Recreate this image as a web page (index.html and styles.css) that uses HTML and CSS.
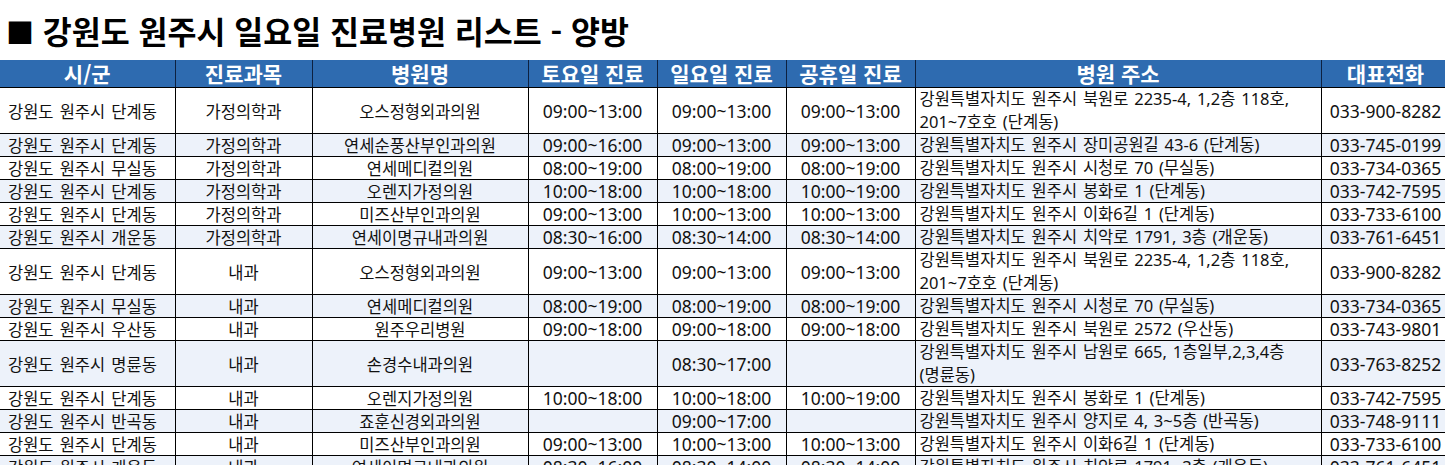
FILE: index.html
```html
<!DOCTYPE html>
<html lang="ko">
<head>
<meta charset="utf-8">
<title>강원도 원주시 일요일 진료병원 리스트 - 양방</title>
<link rel="stylesheet" href="styles.css">
</head>
<body>
<h1 class="title"><span class="sq">■</span> 강원도 원주시 일요일 진료병원 리스트 - 양방</h1>
<table class="list">
<colgroup>
<col class="c-city"><col class="c-dept"><col class="c-name"><col class="c-time"><col class="c-time"><col class="c-time"><col class="c-addr"><col class="c-tel">
</colgroup>
<thead>
<tr><th>시/군</th><th>진료과목</th><th>병원명</th><th>토요일 진료</th><th>일요일 진료</th><th>공휴일 진료</th><th>병원 주소</th><th>대표전화</th></tr>
</thead>
<tbody>
<tr class="double"><td class="city">강원도 원주시 단계동</td><td>가정의학과</td><td>오스정형외과의원</td><td class="num">09:00~13:00</td><td class="num">09:00~13:00</td><td class="num">09:00~13:00</td><td class="addr">강원특별자치도 원주시 북원로 2235-4, 1,2층 118호,<br>201~7호호 (단계동)</td><td class="num">033-900-8282</td></tr>
<tr class="alt"><td class="city">강원도 원주시 단계동</td><td>가정의학과</td><td>연세순풍산부인과의원</td><td class="num">09:00~16:00</td><td class="num">09:00~13:00</td><td class="num">09:00~13:00</td><td class="addr">강원특별자치도 원주시 장미공원길 43-6 (단계동)</td><td class="num">033-745-0199</td></tr>
<tr><td class="city">강원도 원주시 무실동</td><td>가정의학과</td><td>연세메디컬의원</td><td class="num">08:00~19:00</td><td class="num">08:00~19:00</td><td class="num">08:00~19:00</td><td class="addr">강원특별자치도 원주시 시청로 70 (무실동)</td><td class="num">033-734-0365</td></tr>
<tr class="alt"><td class="city">강원도 원주시 단계동</td><td>가정의학과</td><td>오렌지가정의원</td><td class="num">10:00~18:00</td><td class="num">10:00~18:00</td><td class="num">10:00~19:00</td><td class="addr">강원특별자치도 원주시 봉화로 1 (단계동)</td><td class="num">033-742-7595</td></tr>
<tr><td class="city">강원도 원주시 단계동</td><td>가정의학과</td><td>미즈산부인과의원</td><td class="num">09:00~13:00</td><td class="num">10:00~13:00</td><td class="num">10:00~13:00</td><td class="addr">강원특별자치도 원주시 이화6길 1 (단계동)</td><td class="num">033-733-6100</td></tr>
<tr class="alt"><td class="city">강원도 원주시 개운동</td><td>가정의학과</td><td>연세이명규내과의원</td><td class="num">08:30~16:00</td><td class="num">08:30~14:00</td><td class="num">08:30~14:00</td><td class="addr">강원특별자치도 원주시 치악로 1791, 3층 (개운동)</td><td class="num">033-761-6451</td></tr>
<tr class="double"><td class="city">강원도 원주시 단계동</td><td>내과</td><td>오스정형외과의원</td><td class="num">09:00~13:00</td><td class="num">09:00~13:00</td><td class="num">09:00~13:00</td><td class="addr">강원특별자치도 원주시 북원로 2235-4, 1,2층 118호,<br>201~7호호 (단계동)</td><td class="num">033-900-8282</td></tr>
<tr class="alt"><td class="city">강원도 원주시 무실동</td><td>내과</td><td>연세메디컬의원</td><td class="num">08:00~19:00</td><td class="num">08:00~19:00</td><td class="num">08:00~19:00</td><td class="addr">강원특별자치도 원주시 시청로 70 (무실동)</td><td class="num">033-734-0365</td></tr>
<tr><td class="city">강원도 원주시 우산동</td><td>내과</td><td>원주우리병원</td><td class="num">09:00~18:00</td><td class="num">09:00~18:00</td><td class="num">09:00~18:00</td><td class="addr">강원특별자치도 원주시 북원로 2572 (우산동)</td><td class="num">033-743-9801</td></tr>
<tr class="alt double"><td class="city">강원도 원주시 명륜동</td><td>내과</td><td>손경수내과의원</td><td class="num"></td><td class="num">08:30~17:00</td><td class="num"></td><td class="addr">강원특별자치도 원주시 남원로 665, 1층일부,2,3,4층<br>(명륜동)</td><td class="num">033-763-8252</td></tr>
<tr><td class="city">강원도 원주시 단계동</td><td>내과</td><td>오렌지가정의원</td><td class="num">10:00~18:00</td><td class="num">10:00~18:00</td><td class="num">10:00~19:00</td><td class="addr">강원특별자치도 원주시 봉화로 1 (단계동)</td><td class="num">033-742-7595</td></tr>
<tr class="alt"><td class="city">강원도 원주시 반곡동</td><td>내과</td><td>죠훈신경외과의원</td><td class="num"></td><td class="num">09:00~17:00</td><td class="num"></td><td class="addr">강원특별자치도 원주시 양지로 4, 3~5층 (반곡동)</td><td class="num">033-748-9111</td></tr>
<tr><td class="city">강원도 원주시 단계동</td><td>내과</td><td>미즈산부인과의원</td><td class="num">09:00~13:00</td><td class="num">10:00~13:00</td><td class="num">10:00~13:00</td><td class="addr">강원특별자치도 원주시 이화6길 1 (단계동)</td><td class="num">033-733-6100</td></tr>
<tr class="alt"><td class="city">강원도 원주시 개운동</td><td>내과</td><td>연세이명규내과의원</td><td class="num">08:30~16:00</td><td class="num">08:30~14:00</td><td class="num">08:30~14:00</td><td class="addr">강원특별자치도 원주시 치악로 1791, 3층 (개운동)</td><td class="num">033-761-6451</td></tr>
</tbody>
</table>
</body>
</html>
```

FILE: styles.css
```css
html, body {
  margin: 0;
  padding: 0;
  background: #ffffff;
  overflow: hidden;
}
body {
  font-family: "Noto Sans", "Noto Sans CJK KR", sans-serif;
  color: #111111;
  width: 1460px;
}
.title {
  margin: 0;
  height: 60px;
  line-height: 60px;
  padding-left: 6px;
  font-family: "Noto Sans CJK KR", sans-serif;
  font-size: 31.5px;
  font-weight: 700;
  color: #000000;
  white-space: nowrap;
}
.sq {
  font-size: 28px;
}
.list {
  border-collapse: collapse;
  table-layout: fixed;
  width: 1450px;
}
.c-city { width: 175px; }
.c-dept { width: 137px; }
.c-name { width: 216px; }
.c-time { width: 129px; }
.c-addr { width: 406px; }
.c-tel { width: 129px; }
.list th {
  background: #2e6bb0;
  color: #ffffff;
  font-family: "Noto Sans CJK KR", sans-serif;
  font-weight: 700;
  font-size: 21px;
  height: 27px;
  line-height: 27px;
  padding: 0;
  border: 1px solid #0d2140;
  border-top: none;
  border-bottom: 1px solid #000000;
  white-space: nowrap;
}
.list th:first-child { border-left: none; }
.list td {
  height: 22px;
  line-height: 22px;
  padding: 0 4px;
  border: 1px solid #000000;
  font-family: "Noto Sans CJK KR", sans-serif;
  font-size: 16.5px;
  word-spacing: 1.5px;
  text-align: center;
  vertical-align: middle;
  white-space: nowrap;
  overflow: hidden;
}
.list td:first-child { border-left: none; }
.list tr.alt td { background: #edf2fa; }
.list tr.double td { height: 45px; }
.list td.city {
  text-align: left;
  padding-left: 8px;
}
.list td.addr {
  text-align: left;
  line-height: 22px;
  padding-left: 4px;
  font-family: "Noto Sans", "Noto Sans CJK KR", sans-serif;
}
.list tr.double td.addr {
  line-height: 22.5px;
}
.list td.num {
  font-family: "Noto Sans", "Noto Sans CJK KR", sans-serif;
  font-size: 17.5px;
  word-spacing: 0;
}
```
